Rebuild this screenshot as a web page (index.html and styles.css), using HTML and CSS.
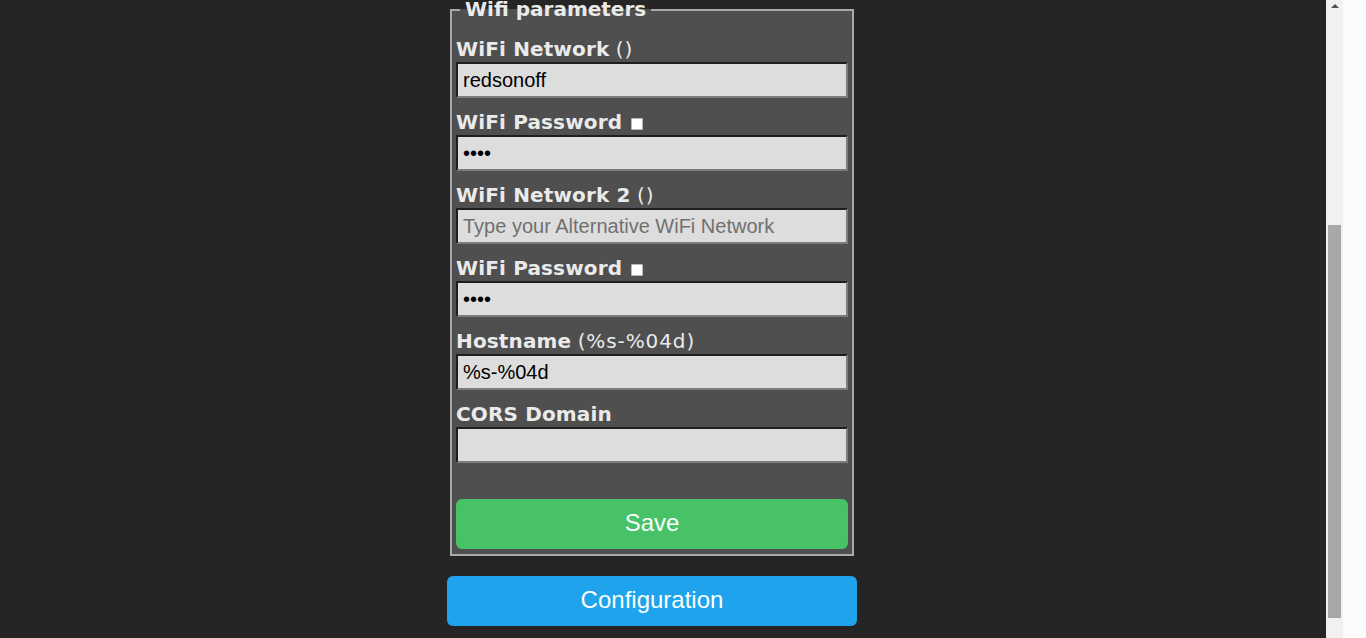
FILE: index.html
```html
<!DOCTYPE html>
<html lang="en">
<head>
<meta charset="utf-8">
<title>Configure Wifi</title>
<link rel="stylesheet" href="styles.css">
</head>
<body>
<div class="page">
  <main class="view">
    <div class="col">
      <fieldset class="box">
        <legend class="box-title">Wifi parameters</legend>
        <div class="fields">
          <div class="field">
            <label class="lbl"><b>WiFi Network</b> <span class="hint">()</span></label>
            <input class="inp" type="text" value="redsonoff">
          </div>
          <div class="field">
            <label class="lbl"><b>WiFi Password</b> <span class="chk"></span></label>
            <input class="inp" type="password" value="****">
          </div>
          <div class="field">
            <label class="lbl"><b>WiFi Network 2</b> <span class="hint">()</span></label>
            <input class="inp" type="text" placeholder="Type your Alternative WiFi Network">
          </div>
          <div class="field">
            <label class="lbl"><b>WiFi Password</b> <span class="chk"></span></label>
            <input class="inp" type="password" value="****">
          </div>
          <div class="field">
            <label class="lbl"><b>Hostname</b> <span class="hint">(%s-%04d)</span></label>
            <input class="inp" type="text" value="%s-%04d">
          </div>
          <div class="field">
            <label class="lbl"><b>CORS Domain</b></label>
            <input class="inp" type="text" value="">
          </div>
        </div>
        <button class="btn btn-green" type="button">Save</button>
      </fieldset>
      <button class="btn btn-blue" type="button">Configuration</button>
    </div>
  </main>
  <div class="scrollbar">
    <div class="sb-arrow"></div>
    <div class="sb-thumb"></div>
  </div>
  <div class="edge"></div>
</div>
</body>
</html>
```

FILE: styles.css
```css
html, body {
  margin: 0;
  padding: 0;
  height: 638px;
  overflow: hidden;
  background: #fcfcfc;
}

.page {
  display: flex;
  height: 638px;
}

.view {
  width: 1326px;
  flex: 0 0 1326px;
  box-sizing: border-box;
  background: #252525;
  display: flex;
  justify-content: center;
  padding-right: 22px;
  font-family: "DejaVu Sans", Verdana, sans-serif;
  color: #eaeaea;
}

.col {
  width: 410px;
  display: flex;
  flex-direction: column;
}

.box {
  margin: 0 3px;
  padding: 16px 4px 5px;
  border: 2px solid #a9a9a9;
  background: #4f4f4f;
  min-width: 0;
}

.box-title {
  font-weight: bold;
  font-size: 20px;
  line-height: 19px;
  padding: 0 5px;
  margin-left: 4px;
  color: #eaeaea;
}

.fields {
  display: flex;
  flex-direction: column;
  gap: 10px;
}

.field {
  display: flex;
  flex-direction: column;
}

.lbl {
  font-size: 20px;
  line-height: 29px;
  height: 27px;
  white-space: nowrap;
}

.lbl b {
  letter-spacing: 0.15px;
}

.hint {
  letter-spacing: 0.9px;
}

.chk {
  display: inline-block;
  width: 10px;
  height: 10px;
  background: #ffffff;
  border: 1px solid #b8b8b8;
  border-radius: 1px;
  margin-left: 2px;
  vertical-align: -1px;
}

.inp {
  display: block;
  width: 100%;
  height: 36px;
  box-sizing: border-box;
  margin: 0;
  padding: 4.5px 5px;
  font-family: "Liberation Sans", Arial, sans-serif;
  font-size: 20px;
  line-height: 23px;
  color: #000000;
  background: #dddddd;
  border-style: solid;
  border-width: 2px;
  border-color: #1e1e1e #7c7c7c #7c7c7c #1e1e1e;
  outline: none;
}

.inp::placeholder {
  color: #707070;
  opacity: 1;
}

.btn {
  display: block;
  width: 100%;
  height: 50px;
  box-sizing: border-box;
  border: 0;
  border-radius: 6px;
  padding: 0 0 2px;
  font-family: "Liberation Sans", Arial, sans-serif;
  font-size: 24px;
  line-height: 48px;
  color: #faffff;
  cursor: pointer;
}

.btn-green {
  background: #47c266;
  margin-top: 36px;
}

.btn-blue {
  background: #1fa3ec;
  margin-top: 20px;
}

.scrollbar {
  flex: 0 0 17px;
  width: 17px;
  background: #f1f1f1;
  display: flex;
  flex-direction: column;
  align-items: center;
}

.sb-arrow {
  margin-top: 4px;
  width: 0;
  height: 0;
  border-left: 4px solid transparent;
  border-right: 4px solid transparent;
  border-bottom: 4px solid #505050;
}

.sb-thumb {
  margin-top: 217px;
  width: 13px;
  height: 393px;
  background: #a8a8a8;
}

.edge {
  flex: 1 1 auto;
  background: #fcfcfc;
}
```
